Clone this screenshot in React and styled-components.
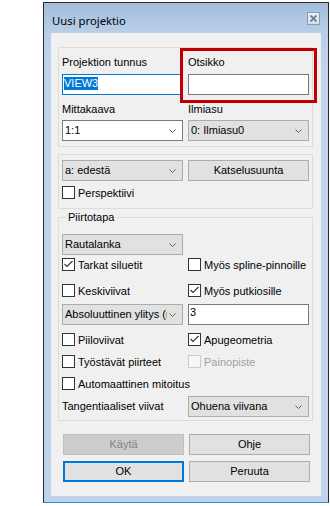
import React from "react";
import styled, { createGlobalStyle } from "styled-components";

const GlobalStyle = createGlobalStyle`
  html, body { margin: 0; padding: 0; background: #ffffff; }
  body {
    font-family: "Liberation Sans", Arial, sans-serif;
    font-size: 11px;
    color: #000000;
  }
  * { box-sizing: border-box; }
`;

const Stage = styled.div`
  padding: 2px 0 0 43px;
`;

const Window = styled.div`
  width: 286px;
  height: 501px;
  border: 1px solid #2b2b2b;
  border-bottom-color: #2f8fd0;
  background: linear-gradient(to bottom, #a3bedb 0px, #b8cfe8 30px, #bfd4ea 60px, #bfd4ea 100%);
  display: flex;
  flex-direction: column;
`;

const TitleBar = styled.div`
  flex: none;
  height: 30px;
  display: flex;
  align-items: flex-start;
  padding: 0 8px 0 8px;
`;

const TitleText = styled.div`
  font-family: "Noto Sans", "Open Sans", sans-serif;
  font-size: 11.3px;
  line-height: 16px;
  padding-top: 10px;
  color: #000000;
`;

const CloseButton = styled.div`
  margin: 9px 0 0 auto;
  width: 13px;
  height: 13px;
  border: 1px solid #8c9bb0;
  background: linear-gradient(#e9eff6, #d5dfeb);
  display: flex;
  align-items: center;
  justify-content: center;
`;

const Client = styled.div`
  flex: none;
  height: 463px;
  margin: 0 7px;
  background: #f0f0f0;
  display: flex;
  flex-direction: column;
  padding: 14px 0 0 7px;
`;

const Group = styled.div`
  position: relative;
  width: 255px;
  height: ${(p) => p.$h}px;
  margin-top: ${(p) => p.$mt || 0}px;
  border: 1px solid #dcdcdc;
  padding: ${(p) => p.$pt}px 0 0 3px;
`;

const FieldGrid = styled.div`
  display: grid;
  grid-template-columns: 121px 121px;
  grid-template-rows: 18px 29px 17px 21px;
  column-gap: 5px;
  align-items: start;
`;

const FieldLabel = styled.div`
  line-height: 13px;
  white-space: nowrap;
`;

const TextBox = styled.div`
  height: 21px;
  border: 1px solid ${(p) => (p.$focused ? "#0078d7" : "#7a7a7a")};
  background: #ffffff;
  padding: ${(p) => (p.$pt != null ? p.$pt : 2)}px 1px 0 1px;
  line-height: 13px;
  white-space: nowrap;
  overflow: hidden;
`;

const Selected = styled.span`
  display: inline-block;
  background: #0078d7;
  color: #ffffff;
  line-height: 13px;
`;

const Combo = styled.div`
  height: 21px;
  border: 1px solid ${(p) => (p.$editable ? "#7a7a7a" : "#adadad")};
  background: ${(p) => (p.$editable ? "#ffffff" : "#e1e1e1")};
  display: flex;
  align-items: center;
  padding: 0 6px 0 2px;
  gap: 2px;
`;

const ComboText = styled.span`
  flex: 1;
  min-width: 0;
  overflow: hidden;
  white-space: nowrap;
  line-height: 13px;
`;

const Annotation = styled.div`
  position: absolute;
  left: 121px;
  top: 0;
  width: 137px;
  height: 55px;
  border: 3px solid #c00000;
  z-index: 2;
  pointer-events: none;
`;

const Row = styled.div`
  display: grid;
  grid-template-columns: 121px 121px;
  column-gap: 5px;
  align-items: center;
  margin-top: ${(p) => p.$mt || 0}px;
  height: ${(p) => p.$h || 13}px;
`;

const CheckItem = styled.div`
  display: flex;
  align-items: center;
  gap: 3px;
  height: 13px;
  white-space: nowrap;
  color: ${(p) => (p.$disabled ? "#a0a0a0" : "#000000")};
`;

const Box = styled.span`
  flex: none;
  width: 13px;
  height: 13px;
  border: 1px solid ${(p) => (p.$disabled ? "#cccccc" : "#333333")};
  background: ${(p) => (p.$disabled ? "#f7f7f7" : "#ffffff")};
  display: flex;
`;

const CheckText = styled.span`
  line-height: 13px;
  padding-top: 1px;
`;

const Button = styled.div`
  height: ${(p) => p.$h || 21}px;
  display: flex;
  align-items: center;
  justify-content: center;
  line-height: 13px;
  background: ${(p) => (p.$disabled ? "#cccccc" : "#e1e1e1")};
  color: ${(p) => (p.$disabled ? "#838383" : "#000000")};
  border: ${(p) =>
    p.$primary ? "2px solid #0078d7" : p.$disabled ? "1px solid #bfbfbf" : "1px solid #adadad"};
`;

const Fieldset = styled.fieldset`
  margin: 2px 0 0 0;
  width: 255px;
  min-inline-size: 0;
  border: 1px solid #dcdcdc;
  padding: 0 0 3px 3px;
`;

const Legend = styled.legend`
  margin-left: 4px;
  padding: 0 2px;
  line-height: 13px;
  font-size: 11px;
`;

const ButtonGrid = styled.div`
  display: grid;
  grid-template-columns: 121px 121px;
  grid-template-rows: 21px 21px;
  column-gap: 5px;
  row-gap: 6px;
  margin: 13px 0 0 5px;
`;

const Chevron = () => (
  <svg width="7" height="4" viewBox="0 0 7 4" style={{ flex: "none" }}>
    <polyline points="0.5,0.5 3.5,3.5 6.5,0.5" fill="none" stroke="#606060" strokeWidth="1" />
  </svg>
);

const CheckMark = () => (
  <svg width="11" height="11" viewBox="0 0 11 11">
    <polyline points="1.5,5 4,7.5 9.5,2" fill="none" stroke="#333333" strokeWidth="1.1" />
  </svg>
);

const Check = ({ label, checked, disabled }) => (
  <CheckItem $disabled={disabled}>
    <Box $disabled={disabled}>{checked && <CheckMark />}</Box>
    <CheckText>{label}</CheckText>
  </CheckItem>
);

const Select = ({ value, editable }) => (
  <Combo $editable={editable}>
    <ComboText>{value}</ComboText>
    <Chevron />
  </Combo>
);

export default function App() {
  return (
    <>
      <GlobalStyle />
      <Stage>
        <Window>
          <TitleBar>
            <TitleText>Uusi projektio</TitleText>
            <CloseButton>
              <svg width="7" height="7" viewBox="0 0 7 7">
                <path d="M0.5 0.5 L6.5 6.5 M6.5 0.5 L0.5 6.5" stroke="#6c7b8d" strokeWidth="1.8" />
              </svg>
            </CloseButton>
          </TitleBar>
          <Client>
            <Group $h={100} $pt={8}>
              <FieldGrid>
                <FieldLabel>Projektion tunnus</FieldLabel>
                <FieldLabel>Otsikko</FieldLabel>
                <TextBox $focused>
                  <Selected>VIEW3</Selected>
                </TextBox>
                <TextBox />
                <FieldLabel>Mittakaava</FieldLabel>
                <FieldLabel>Ilmiasu</FieldLabel>
                <Select value="1:1" editable />
                <Select value="0: Ilmiasu0" />
              </FieldGrid>
              <Annotation />
            </Group>

            <Group $h={55} $pt={5} $mt={7}>
              <Row $h={21}>
                <Select value="a: edestä" />
                <Button>Katselusuunta</Button>
              </Row>
              <Row $mt={5}>
                <Check label="Perspektiivi" />
              </Row>
            </Group>

            <Fieldset>
              <Legend>Piirtotapa</Legend>
              <Row $mt={10} $h={21}>
                <Select value="Rautalanka" />
              </Row>
              <Row $mt={3}>
                <Check label="Tarkat siluetit" checked />
                <Check label="Myös spline-pinnoille" />
              </Row>
              <Row $mt={13}>
                <Check label="Keskiviivat" />
                <Check label="Myös putkiosille" checked />
              </Row>
              <Row $mt={7} $h={21}>
                <Select value="Absoluuttinen ylitys (mm)" />
                <TextBox $pt={1}>3</TextBox>
              </Row>
              <Row $mt={8}>
                <Check label="Piiloviivat" />
                <Check label="Apugeometria" checked />
              </Row>
              <Row $mt={9}>
                <Check label="Työstävät piirteet" />
                <Check label="Painopiste" disabled />
              </Row>
              <Row $mt={9}>
                <Check label="Automaattinen mitoitus" />
              </Row>
              <Row $mt={6} $h={21}>
                <FieldLabel>Tangentiaaliset viivat</FieldLabel>
                <Select value="Ohuena viivana" />
              </Row>
            </Fieldset>

            <ButtonGrid>
              <Button $disabled>Käytä</Button>
              <Button>Ohje</Button>
              <Button $primary>OK</Button>
              <Button>Peruuta</Button>
            </ButtonGrid>
          </Client>
        </Window>
      </Stage>
    </>
  );
}
